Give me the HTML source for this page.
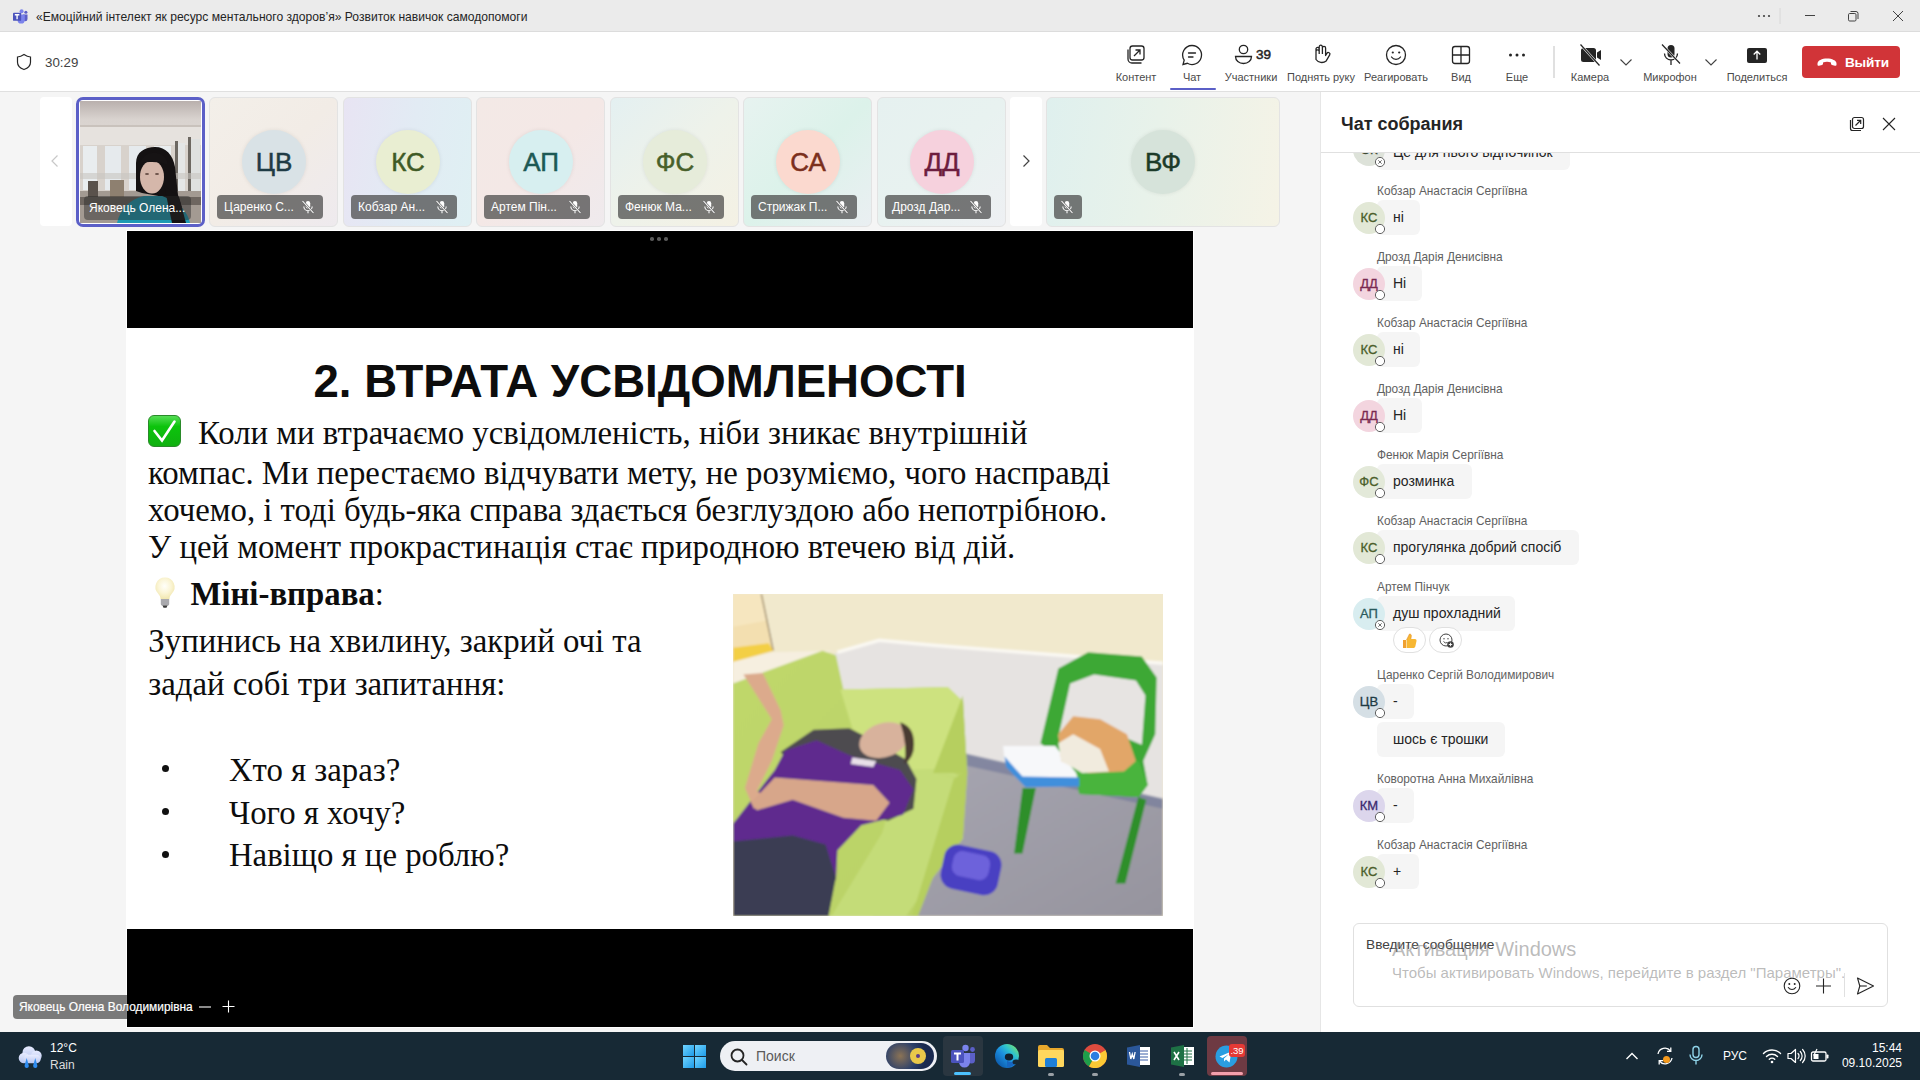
<!DOCTYPE html>
<html><head><meta charset="utf-8">
<style>
*{margin:0;padding:0;box-sizing:border-box}
html,body{width:1920px;height:1080px;overflow:hidden;background:#f5f5f5;font-family:"Liberation Sans",sans-serif;color:#242424}
.a{position:absolute}
#titlebar{left:0;top:0;width:1920px;height:32px;background:#ebebeb;border-bottom:1px solid #dcdcdc}
#toolbar{left:0;top:32px;width:1920px;height:60px;background:#fff;border-bottom:1px solid #e0e0e0}
#stage{left:0;top:92px;width:1320px;height:940px;background:#f5f5f5}
#chat{left:1320px;top:92px;width:600px;height:940px;background:#fff;border-left:1px solid #e6e6e6}
#taskbar{left:0;top:1032px;width:1920px;height:48px;background:#172935}
.tb-btn{position:absolute;top:0;height:60px;text-align:center}
.tb-lbl{position:absolute;top:38.5px;font-size:11px;color:#4a4a4a;white-space:nowrap;transform:translateX(-50%)}
#slide{left:127px;top:231px;width:1066px;height:796px;background:#000;box-shadow:0 0 0 1px #fff}
#slidewhite{left:127px;top:328px;width:1066px;height:601px;background:#fff}

.tile{border:1px solid #e3e3e3;border-radius:6px;overflow:hidden}
.av{border-radius:50%;text-align:center;line-height:64px;font-size:26px;box-shadow:0 0 4px rgba(0,0,0,.08);-webkit-text-stroke:.5px currentColor}
.nm{height:24px;background:rgba(70,70,70,.72);border-radius:4px;color:#fff;font-size:12px;line-height:24px;padding-left:7px;white-space:nowrap}

.sl{font-family:"Liberation Serif",serif;font-size:32.8px;line-height:32.8px;color:#0d0d0d;white-space:nowrap}

.cnm{font-size:11.85px;color:#616161;white-space:nowrap;line-height:16px}
.bub{background:#f5f5f5;border-radius:6px}
.bub span{position:absolute;left:16px;top:9px;font-size:14px;color:#242424;white-space:nowrap;line-height:17px}
.cav{width:32px;height:32px;border-radius:50%;text-align:center;line-height:32px;font-size:13px;font-weight:normal;-webkit-text-stroke:.3px currentColor}
.react{width:33px;height:26px;border:1px solid #e0e0e0;border-radius:13px;background:#fff}
</style></head><body>

<div id="titlebar" class="a">
 <svg class="a" style="left:11.5px;top:9px" width="16.5" height="14.5" viewBox="0 0 18 16">
  <circle cx="10.5" cy="2.6" r="2.2" fill="#7b83eb"/><circle cx="15.2" cy="3.6" r="1.7" fill="#5b5fc7"/>
  <path d="M12 6h5v5a2.5 2.5 0 0 1-5 0z" fill="#5b5fc7"/>
  <path d="M6 6h8v6a4 4 0 0 1-8 0z" fill="#7b83eb"/>
  <rect x="1" y="4" width="9" height="9" rx="1" fill="#4b53bc"/>
  <path d="M3 6.3h5M5.5 6.3v5" stroke="#fff" stroke-width="1.5"/>
 </svg>
 <div class="a" style="left:36px;top:9.5px;font-size:12.1px;color:#242424;white-space:nowrap" id="ttl">«Емоційний інтелект як ресурс ментального здоров’я» Розвиток навичок самодопомоги</div>
 <svg class="a" style="left:1750px;top:8px" width="160" height="16" viewBox="0 0 160 16">
  <circle cx="9" cy="8" r="1.1" fill="#424242"/><circle cx="14" cy="8" r="1.1" fill="#424242"/><circle cx="19" cy="8" r="1.1" fill="#424242"/>
  <line x1="30" y1="0" x2="30" y2="16" stroke="#d8d8d8" stroke-width="1"/>
  <line x1="55" y1="7.5" x2="65" y2="7.5" stroke="#424242" stroke-width="1"/>
  <rect x="98.5" y="5.5" width="7.5" height="7.5" rx="1.2" fill="none" stroke="#424242" stroke-width="1"/>
  <path d="M100.5 3.5h5.5a2 2 0 0 1 2 2v5.5" fill="none" stroke="#424242" stroke-width="1"/>
  <path d="M143 3l10 10M153 3l-10 10" stroke="#424242" stroke-width="1"/>
 </svg>
</div>
<div id="toolbar" class="a">
 <svg class="a" style="left:14.5px;top:21px" width="18" height="18" viewBox="0 0 18 18"><path d="M9 1.6C6.8 3.1 4.6 3.9 2.5 4v5.2c0 3.3 2.2 5.8 6.5 7.3 4.3-1.5 6.5-4 6.5-7.3V4C13.4 3.9 11.2 3.1 9 1.6z" fill="none" stroke="#242424" stroke-width="1.2"/></svg>
 <div class="a" style="left:45px;top:22.5px;font-size:13.3px;color:#424242">30:29</div>
 <!-- buttons -->
 <svg class="a" style="left:1124px;top:11px" width="24" height="24" viewBox="0 0 24 24"><rect x="6" y="3" width="14" height="14" rx="2.5" fill="none" stroke="#242424" stroke-width="1.3"/><path d="M4 6.5v9.5a4 4 0 0 0 4 4h9.5" fill="none" stroke="#242424" stroke-width="1.3"/><path d="M10 13l6-6M11.5 7h4.5v4.5" fill="none" stroke="#242424" stroke-width="1.3"/></svg>
 <div class="tb-lbl" style="left:1136px">Контент</div>
 <svg class="a" style="left:1180px;top:11px" width="24" height="24" viewBox="0 0 24 24"><path d="M12 2.5a9.5 9.5 0 1 1-4.6 17.8L3 21.5l1.2-4.3A9.5 9.5 0 0 1 12 2.5z" fill="none" stroke="#242424" stroke-width="1.3"/><path d="M8.5 10h7M8.5 14h4.5" stroke="#242424" stroke-width="1.3" stroke-linecap="round"/></svg>
 <div class="tb-lbl" style="left:1192px">Чат</div>
 <div class="a" style="left:1170px;top:55.5px;width:46px;height:2.5px;background:#5b5fc7;border-radius:1px"></div>
 <svg class="a" style="left:1232px;top:11px" width="24" height="24" viewBox="0 0 24 24"><circle cx="11.5" cy="6.5" r="4.2" fill="none" stroke="#242424" stroke-width="1.3"/><path d="M3.5 13.5h16a0 0 0 0 1 0 0c0 4-3.5 7-8 7s-8-3-8-7z" fill="none" stroke="#242424" stroke-width="1.3"/></svg>
 <div class="a" style="left:1256px;top:15px;font-size:13.5px;font-weight:normal;-webkit-text-stroke:.5px #242424;color:#242424">39</div>
 <div class="tb-lbl" style="left:1251px">Участники</div>
 <svg class="a" style="left:1309px;top:11px" width="24" height="24" viewBox="0 0 24 24"><path d="M7 12V6a1.6 1.6 0 0 1 3.2 0v5M10.2 11V3.8a1.6 1.6 0 0 1 3.2 0V11M13.4 11V5a1.6 1.6 0 0 1 3.2 0v7.5l1.3-2.2a1.6 1.6 0 0 1 2.8 1.6l-3.5 6A7 7 0 0 1 7 16.5V8.5a1.6 1.6 0 0 1 3.2 0" fill="none" stroke="#242424" stroke-width="1.3" stroke-linejoin="round"/></svg>
 <div class="tb-lbl" style="left:1321px">Поднять руку</div>
 <svg class="a" style="left:1384px;top:11px" width="24" height="24" viewBox="0 0 24 24"><circle cx="12" cy="12" r="9.5" fill="none" stroke="#242424" stroke-width="1.3"/><circle cx="8.8" cy="9.5" r="1.1" fill="#242424"/><circle cx="15.2" cy="9.5" r="1.1" fill="#242424"/><path d="M7.5 14a5.5 5.5 0 0 0 9 0" fill="none" stroke="#242424" stroke-width="1.3" stroke-linecap="round"/></svg>
 <div class="tb-lbl" style="left:1396px">Реагировать</div>
 <svg class="a" style="left:1449px;top:11px" width="24" height="24" viewBox="0 0 24 24"><rect x="3.5" y="3.5" width="17" height="17" rx="2.5" fill="none" stroke="#242424" stroke-width="1.3"/><path d="M12 3.5v17M3.5 12h17" stroke="#242424" stroke-width="1.3"/></svg>
 <div class="tb-lbl" style="left:1461px">Вид</div>
 <svg class="a" style="left:1505px;top:11px" width="24" height="24" viewBox="0 0 24 24"><circle cx="5.5" cy="12" r="1.5" fill="#242424"/><circle cx="12" cy="12" r="1.5" fill="#242424"/><circle cx="18.5" cy="12" r="1.5" fill="#242424"/></svg>
 <div class="tb-lbl" style="left:1517px">Еще</div>
 <div class="a" style="left:1553px;top:14px;width:2px;height:32px;background:#e0e0e0"></div>
 <svg class="a" style="left:1578px;top:10px" width="26" height="26" viewBox="0 0 26 26"><path d="M3 8.5a2.5 2.5 0 0 1 2.5-2.5h10a2.5 2.5 0 0 1 2.5 2.5v9a2.5 2.5 0 0 1-2.5 2.5h-10A2.5 2.5 0 0 1 3 17.5z" fill="#242424"/><path d="M19 10.5l4-2.5v10l-4-2.5z" fill="#242424"/><path d="M2.5 2.5l19 21" stroke="#fff" stroke-width="2.5"/><path d="M2.5 2.5l19 21" stroke="#242424" stroke-width="1.2"/></svg>
 <div class="tb-lbl" style="left:1590px">Камера</div>
 <svg class="a" style="left:1619px;top:25px" width="14" height="10" viewBox="0 0 14 10"><path d="M1.5 2.5l5.5 5.5 5.5-5.5" fill="none" stroke="#424242" stroke-width="1.1"/></svg>
 <svg class="a" style="left:1658px;top:10px" width="26" height="26" viewBox="0 0 26 26"><rect x="9.5" y="3" width="7" height="12.5" rx="3.5" fill="#242424"/><path d="M6.5 11.5a6.5 6.5 0 0 0 13 0M13 18v5" fill="none" stroke="#242424" stroke-width="1.3"/><path d="M4 2.5l18 19" stroke="#fff" stroke-width="2.5"/><path d="M4 2.5l18 19" stroke="#242424" stroke-width="1.2"/></svg>
 <div class="tb-lbl" style="left:1670px">Микрофон</div>
 <svg class="a" style="left:1704px;top:25px" width="14" height="10" viewBox="0 0 14 10"><path d="M1.5 2.5l5.5 5.5 5.5-5.5" fill="none" stroke="#424242" stroke-width="1.1"/></svg>
 <svg class="a" style="left:1745px;top:11px" width="24" height="24" viewBox="0 0 24 24"><rect x="2" y="5" width="20" height="15" rx="2" fill="#242424"/><path d="M12 16.5V8.5M8.7 11.5L12 8.2l3.3 3.3" fill="none" stroke="#fff" stroke-width="1.3"/></svg>
 <div class="tb-lbl" style="left:1757px">Поделиться</div>
 <div class="a" style="left:1802px;top:14px;width:98px;height:32px;background:#c4314b;border-radius:4px;background:#d13438"></div>
 <svg class="a" style="left:1816px;top:22px" width="22" height="16" viewBox="0 0 22 16"><path d="M1.5 9.5c0-3 4.5-5 9.5-5s9.5 2 9.5 5v1.2c0 .8-.7 1.3-1.5 1.1l-3-.8c-.6-.2-1-.7-1-1.3V8.4c-1.2-.4-2.6-.6-4-.6s-2.8.2-4 .6v1.3c0 .6-.4 1.1-1 1.3l-3 .8c-.8.2-1.5-.3-1.5-1.1z" fill="#fff"/></svg>
 <div class="a" style="left:1845px;top:22.5px;font-size:13.6px;font-weight:bold;color:#fff;letter-spacing:-.2px">Выйти</div>
</div>


<div id="stage" class="a">
 <div class="a" style="left:40px;top:5px;width:32px;height:129px;background:#fff;border-radius:4px"></div>
 <svg class="a" style="left:48px;top:62px" width="14" height="14" viewBox="0 0 14 14"><path d="M9.5 1.5L4 7l5.5 5.5" fill="none" stroke="#c8c8c8" stroke-width="1.2"/></svg>
 <div class="a" style="left:1010px;top:5px;width:32px;height:129px;background:#fff;border-radius:4px"></div>
 <svg class="a" style="left:1019px;top:62px" width="14" height="14" viewBox="0 0 14 14"><path d="M4.5 1.5L10 7l-5.5 5.5" fill="none" stroke="#424242" stroke-width="1.2"/></svg>
 <div class="a" style="left:76px;top:5px;width:129px;height:130px;border:3px solid #5b5fc7;border-radius:7px;overflow:hidden;background:#fff" id="vid">
  <svg class="a" style="left:1px;top:1px" width="121" height="122" viewBox="0 0 121 122">
   <defs><linearGradient id="ceil" x1="0" y1="0" x2="0" y2="1"><stop offset="0" stop-color="#b9b0ad"/><stop offset=".15" stop-color="#d9d3cf"/><stop offset="1" stop-color="#e9e5e1"/></linearGradient></defs>
   <rect width="121" height="122" fill="url(#ceil)"/>
   <rect y="24" width="121" height="2" fill="#c9c2bc"/>
   <rect y="26" width="121" height="18" fill="#e6e2de"/>
   <rect y="44" width="121" height="46" fill="#d8d2cc"/>
   <rect x="3" y="45" width="14" height="44" fill="#e9edef"/>
   <rect x="25" y="45" width="16" height="44" fill="#e6eaed"/>
   <rect x="49" y="45" width="17" height="44" fill="#e6eaed"/>
   <rect x="74" y="45" width="17" height="44" fill="#e9edef"/>
   <rect x="95" y="40" width="3" height="52" fill="#6d6862"/>
   <rect x="98" y="42" width="7" height="50" fill="#e4e6e6"/>
   <rect x="108" y="36" width="3" height="58" fill="#6d6862"/>
   <rect x="111" y="38" width="9" height="56" fill="#dfe1e0"/>
   <rect x="0" y="72" width="121" height="6" fill="#c8c4c0" opacity=".6"/>
   <rect y="90" width="121" height="32" fill="#a39a92"/>
   <rect x="8" y="80" width="10" height="18" fill="#5a524c"/>
   <rect x="30" y="79" width="14" height="20" fill="#8e8070"/>
   <rect x="0" y="96" width="121" height="8" fill="#6e6660"/>
   <path d="M56 90V62C56 51 65 46 75 46 86 46 93 54 95 66L98 94 107 122H82L84 96 62 92z" fill="#141112"/>
   <ellipse cx="72" cy="76" rx="12" ry="16.5" fill="#d5b7aa"/>
   <path d="M60 62c3-8 10-11 17-10 6 1 10 5 11 12-7-3-15-4-28-2z" fill="#161314"/>
   <ellipse cx="67" cy="73" rx="2" ry="1" fill="#6a5048"/><ellipse cx="77" cy="73" rx="2" ry="1" fill="#6a5048"/>
   <path d="M37 122c3-14 13-24 27-27h18c10 4 24 10 28 27z" fill="#1e9bb2"/>
   <path d="M84 84l8 38h14l-7-26z" fill="#141112"/>
  </svg>
  <div class="a" style="left:5px;top:96px;width:107px;height:24px;background:rgba(40,40,40,.45);border-radius:4px"></div>
  <div class="a" style="left:10px;top:101px;font-size:12px;line-height:14px;color:#fff;white-space:nowrap">Яковець Олена...</div>
 </div>
 <div class="a tile" style="left:209px;top:5px;width:129px;height:130px;background:linear-gradient(135deg,#f3efe9 0%,#f2ece6 50%,#eeeaee 100%)">
  <div class="a av" style="left:32px;top:32px;width:64px;height:64px;background:#d9e2e6;color:#1f3b45">ЦВ</div>
  <div class="a nm" style="left:7px;top:97px;width:106px">Царенко С...<svg class="a" style="right:7px;top:4px" width="16" height="16" viewBox="0 0 16 16"><rect x="5.8" y="2" width="4.4" height="7.5" rx="2.2" fill="#fff"/><path d="M3.8 7.5a4.2 4.2 0 0 0 8.4 0M8 11.7v2.5" fill="none" stroke="#fff" stroke-width="1.1"/><path d="M2.5 2l11 12" stroke="#6e6e6e" stroke-width="2.2"/><path d="M2.5 2l11 12" stroke="#fff" stroke-width="1.1"/></svg></div>
 </div>
 <div class="a tile" style="left:343px;top:5px;width:129px;height:130px;background:linear-gradient(100deg,#e8e4f3 0%,#e2ebf4 50%,#dff0f3 100%)">
  <div class="a av" style="left:32px;top:32px;width:64px;height:64px;background:#e9eed2;color:#3f5a25">КС</div>
  <div class="a nm" style="left:7px;top:97px;width:106px">Кобзар Ан...<svg class="a" style="right:7px;top:4px" width="16" height="16" viewBox="0 0 16 16"><rect x="5.8" y="2" width="4.4" height="7.5" rx="2.2" fill="#fff"/><path d="M3.8 7.5a4.2 4.2 0 0 0 8.4 0M8 11.7v2.5" fill="none" stroke="#fff" stroke-width="1.1"/><path d="M2.5 2l11 12" stroke="#6e6e6e" stroke-width="2.2"/><path d="M2.5 2l11 12" stroke="#fff" stroke-width="1.1"/></svg></div>
 </div>
 <div class="a tile" style="left:476px;top:5px;width:129px;height:130px;background:linear-gradient(135deg,#f3e9e6 0%,#f4e8e6 50%,#efeaed 100%)">
  <div class="a av" style="left:32px;top:32px;width:64px;height:64px;background:#d7eff0;color:#1d5955">АП</div>
  <div class="a nm" style="left:7px;top:97px;width:106px">Артем Пін...<svg class="a" style="right:7px;top:4px" width="16" height="16" viewBox="0 0 16 16"><rect x="5.8" y="2" width="4.4" height="7.5" rx="2.2" fill="#fff"/><path d="M3.8 7.5a4.2 4.2 0 0 0 8.4 0M8 11.7v2.5" fill="none" stroke="#fff" stroke-width="1.1"/><path d="M2.5 2l11 12" stroke="#6e6e6e" stroke-width="2.2"/><path d="M2.5 2l11 12" stroke="#fff" stroke-width="1.1"/></svg></div>
 </div>
 <div class="a tile" style="left:610px;top:5px;width:129px;height:130px;background:linear-gradient(135deg,#e4f0f1 0%,#eef2ea 50%,#f4f1e4 100%)">
  <div class="a av" style="left:32px;top:32px;width:64px;height:64px;background:#e6ecda;color:#48602a">ФС</div>
  <div class="a nm" style="left:7px;top:97px;width:106px">Фенюк Ма...<svg class="a" style="right:7px;top:4px" width="16" height="16" viewBox="0 0 16 16"><rect x="5.8" y="2" width="4.4" height="7.5" rx="2.2" fill="#fff"/><path d="M3.8 7.5a4.2 4.2 0 0 0 8.4 0M8 11.7v2.5" fill="none" stroke="#fff" stroke-width="1.1"/><path d="M2.5 2l11 12" stroke="#6e6e6e" stroke-width="2.2"/><path d="M2.5 2l11 12" stroke="#fff" stroke-width="1.1"/></svg></div>
 </div>
 <div class="a tile" style="left:743px;top:5px;width:129px;height:130px;background:linear-gradient(135deg,#e7f3f0 0%,#dcf2ea 50%,#eaeff2 100%)">
  <div class="a av" style="left:32px;top:32px;width:64px;height:64px;background:#fbd9cf;color:#7b2f1c">СА</div>
  <div class="a nm" style="left:7px;top:97px;width:106px">Стрижак П...<svg class="a" style="right:7px;top:4px" width="16" height="16" viewBox="0 0 16 16"><rect x="5.8" y="2" width="4.4" height="7.5" rx="2.2" fill="#fff"/><path d="M3.8 7.5a4.2 4.2 0 0 0 8.4 0M8 11.7v2.5" fill="none" stroke="#fff" stroke-width="1.1"/><path d="M2.5 2l11 12" stroke="#6e6e6e" stroke-width="2.2"/><path d="M2.5 2l11 12" stroke="#fff" stroke-width="1.1"/></svg></div>
 </div>
 <div class="a tile" style="left:877px;top:5px;width:129px;height:130px;background:linear-gradient(135deg,#e6f1f0 0%,#e8f2f0 50%,#eef0f3 100%)">
  <div class="a av" style="left:32px;top:32px;width:64px;height:64px;background:#f6d1dd;color:#6d1d3e">ДД</div>
  <div class="a nm" style="left:7px;top:97px;width:106px">Дрозд Дар...<svg class="a" style="right:7px;top:4px" width="16" height="16" viewBox="0 0 16 16"><rect x="5.8" y="2" width="4.4" height="7.5" rx="2.2" fill="#fff"/><path d="M3.8 7.5a4.2 4.2 0 0 0 8.4 0M8 11.7v2.5" fill="none" stroke="#fff" stroke-width="1.1"/><path d="M2.5 2l11 12" stroke="#6e6e6e" stroke-width="2.2"/><path d="M2.5 2l11 12" stroke="#fff" stroke-width="1.1"/></svg></div>
 </div>
 <div class="a tile" style="left:1046px;top:5px;width:234px;height:130px;background:linear-gradient(100deg,#dff0ee 0%,#e8f2ea 45%,#f5f3e6 100%)">
  <div class="a av" style="left:84px;top:32px;width:64px;height:64px;background:#d6e3da;color:#1c3b29">ВФ</div>
  <div class="a nm" style="left:7px;top:97px;width:28px"><svg class="a" style="right:7px;top:4px" width="16" height="16" viewBox="0 0 16 16"><rect x="5.8" y="2" width="4.4" height="7.5" rx="2.2" fill="#fff"/><path d="M3.8 7.5a4.2 4.2 0 0 0 8.4 0M8 11.7v2.5" fill="none" stroke="#fff" stroke-width="1.1"/><path d="M2.5 2l11 12" stroke="#6e6e6e" stroke-width="2.2"/><path d="M2.5 2l11 12" stroke="#fff" stroke-width="1.1"/></svg></div>
 </div>
</div>


<div id="slide" class="a">
 <div class="a" style="left:523px;top:6px;width:24px;height:4px;display:flex;gap:3.5px"><i style="width:3.5px;height:3.5px;border-radius:50%;background:#5a5a5a"></i><i style="width:3.5px;height:3.5px;border-radius:50%;background:#5a5a5a"></i><i style="width:3.5px;height:3.5px;border-radius:50%;background:#5a5a5a"></i></div>
</div>
<div id="slidewhite" class="a"></div>
<div class="a sl" style="left:313.5px;top:365.5px;font-family:'Liberation Sans',sans-serif;font-weight:bold;font-size:45.6px">2. ВТРАТА УСВІДОМЛЕНОСТІ</div>
<div class="a" style="left:148px;top:415px;width:33px;height:32px;border-radius:6px;background:linear-gradient(#55dd55,#0cc40c 35%,#10b010);border:1px solid #2a8a2a"><svg class="a" style="left:-1px;top:-1px" width="33" height="32" viewBox="0 0 33 32"><path d="M6.5 16L14 25.5 26.5 6.5" fill="none" stroke="#fff" stroke-width="2.6" stroke-linecap="round" stroke-linejoin="miter"/></svg></div>
<div class="a sl" style="left:198px;top:417.2px">Коли ми втрачаємо усвідомленість, ніби зникає внутрішній</div>
<div class="a sl" style="left:148px;top:456.7px">компас. Ми перестаємо відчувати мету, не розуміємо, чого насправді</div>
<div class="a sl" style="left:148px;top:494px">хочемо, і тоді будь-яка справа здається безглуздою або непотрібною.</div>
<div class="a sl" style="left:148px;top:530.5px">У цей момент прокрастинація стає природною втечею від дій.</div>
<svg class="a" style="left:151px;top:575px" width="28" height="35" viewBox="0 0 28 35"><defs><radialGradient id="bulb" cx=".48" cy=".4" r=".6"><stop offset="0" stop-color="#fffffa"/><stop offset=".55" stop-color="#fbf5d6"/><stop offset="1" stop-color="#f1e7b0"/></radialGradient></defs><path d="M14 2.5a9.5 9.5 0 0 0-6.8 16.2c1.3 1.5 2.3 3 2.3 5.3h9c0-2.3 1-3.8 2.3-5.3A9.5 9.5 0 0 0 14 2.5z" fill="url(#bulb)"/><path d="M9.8 24h8.4v5c0 1-1 1.8-2 1.8h-4.4c-1 0-2-.8-2-1.8z" fill="#a9a9ad"/><path d="M11.5 30.5h5l-1 2.2h-3z" fill="#3a3a3a"/></svg>
<div class="a sl" style="left:190.4px;top:577.8px"><b>Міні-вправа</b>:</div>
<div class="a sl" style="left:148.3px;top:624.7px">Зупинись на хвилину, закрий очі та</div>
<div class="a sl" style="left:148.3px;top:667.9px">задай собі три запитання:</div>
<div class="a" style="left:162px;top:765px;width:7px;height:7px;border-radius:50%;background:#111"></div>
<div class="a" style="left:162px;top:808px;width:7px;height:7px;border-radius:50%;background:#111"></div>
<div class="a" style="left:162px;top:850.5px;width:7px;height:7px;border-radius:50%;background:#111"></div>
<div class="a sl" style="left:228.9px;top:753.6px">Хто я зараз?</div>
<div class="a sl" style="left:228.9px;top:796.7px">Чого я хочу?</div>
<div class="a sl" style="left:228.9px;top:839.2px">Навіщо я це роблю?</div>
<svg class="a" style="left:733px;top:594px" width="430" height="322" viewBox="0 0 430 322">
 <defs>
  <filter id="bl" x="0" y="0" width="100%" height="100%"><feGaussianBlur stdDeviation="1.2"/></filter>
  <clipPath id="pc"><rect width="430" height="322"/></clipPath>
  <linearGradient id="flr" x1="0" y1="0" x2="1" y2="1"><stop offset="0" stop-color="#a8a7b2"/><stop offset="1" stop-color="#96949e"/></linearGradient>
  <linearGradient id="sofa" x1="0" y1="0" x2="1" y2="1"><stop offset="0" stop-color="#c0d86c"/><stop offset="1" stop-color="#b9d166"/></linearGradient>
 </defs>
 <g clip-path="url(#pc)"><g filter="url(#bl)">
 <rect x="-5" y="-5" width="440" height="332" fill="#f1e9cd"/>
 <polygon points="0.0,0.0 29.8,0.0 40.3,56.7 0.0,67.1" fill="#f3dfb0"/>
 <polygon points="0.0,0.0 29.8,0.0 32.8,26.8 0.0,32.8" fill="#f6e6bf"/>
 <polyline points="28.3,0.0 40.3,56.7" fill="none" stroke="#8a7a60" stroke-width="1.2"/>
 <polygon points="0.0,53.7 35.8,49.2 40.3,56.7 0.0,68.0" fill="#f3cf45"/>
 <polygon points="0.0,68.0 40.3,58.2 98.4,56.7 0.0,89.5" fill="#f6efe0"/>
 <polygon points="101.4,59.7 146.2,47.1 200.0,51.3 430.0,69.2 430.0,322.2 21.0,322.2 21.0,119.3" fill="#e6e3e1"/>
 <polyline points="104.4,58.2 146.2,46.2 200.0,51.3 430.0,69.2" fill="none" stroke="#faf8f2" stroke-width="3.5"/>
 <polygon points="232.8,161.1 430.0,205.8 430.0,322.2 140.3,322.2" fill="url(#flr)"/>
 <polygon points="232.8,159.6 430.0,204.4 430.0,214.8 232.8,171.5" fill="#7a809c" opacity=".8"/>
 <polygon points="0.0,89.5 89.5,56.7 102.9,61.2 110.4,95.5 214.8,93.1 230.0,107.4 229.8,101.4 234.3,179.0 229.8,244.6 200.0,283.4 179.0,322.2 0.0,322.2" fill="url(#sofa)"/>
 <polygon points="107.4,95.5 214.8,93.1 230.0,107.4 230.0,176.0 167.1,176.0 119.3,134.2" fill="#cde27f"/>
 <polygon points="167.1,176.0 214.8,174.5 230.0,185.0 200.0,179.0 226.8,185.0 229.8,244.6 200.0,283.4 173.0,322.2 98.4,322.2 149.2,238.7" fill="#c4dc78"/>
 <polygon points="220.8,185.0 230.0,179.0 200.0,179.0 229.8,101.4 234.3,179.0 229.8,244.6 200.0,283.4 185.0,322.2 179.0,322.2" fill="#b6cf5f"/>
 <polygon points="47.7,158.1 80.5,135.7 116.3,134.2 134.2,143.2 173.0,165.6 183.5,185.0 180.5,214.8 155.1,226.7 89.5,208.8" fill="#4d4b50"/>
 <polygon points="0.0,229.7 41.8,176.0 52.2,156.6 83.5,146.2 119.3,162.6 167.1,176.0 180.5,195.4 170.0,220.8 128.3,231.2 104.4,256.6 102.9,286.4 77.6,247.6 0.0,250.6" fill="#5e2b8e"/>
 <polygon points="0.0,247.6 59.7,241.6 92.5,250.6 102.9,283.4 95.5,322.2 0.0,322.2" fill="#3a3e52"/>
 <polygon points="119.3,163.5 143.2,167.1 140.2,173.0 117.8,170.0" fill="#e8e0e8"/>
 <ellipse cx="150.7" cy="146.2" rx="25" ry="17" fill="#d8b29c" transform="rotate(-18 150.7 146.2)"/>
 <path d="M167.1,128.3 q14,4 14,22 q0,14 -10,20 q4,-18 -4,-42z" fill="#4a3a32"/>
 <polygon points="10.4,80.5 29.8,79.1 47.7,116.3 50.7,131.3 38.8,167.1 23.9,196.9 41.8,208.8 20.9,214.8 11.9,193.9 25.4,149.2 38.8,125.3" fill="#dcaa8c"/>
 <polygon points="17.9,208.8 41.8,183.5 140.2,190.9 156.6,208.8 143.2,226.7 110.4,223.7 59.7,205.8 23.9,216.3" fill="#d7a68a"/>
 <polygon points="307.4,149.2 325.3,74.6 355.1,58.2 408.8,62.6 423.7,83.5 422.3,140.2 410.3,167.1 414.8,190.9 405.8,202.9 346.2,199.9 343.2,185.0 325.3,162.6" fill="#3da834"/>
 <polygon points="325.3,143.2 337.2,89.5 361.1,80.5 402.9,86.5 412.4,101.4 408.8,150.7 390.9,143.2 340.2,149.2" fill="#e7e4e2"/>
 <polygon points="343.2,176.0 405.8,167.1 414.8,190.9 405.8,202.9 346.2,199.9" fill="#48b43c"/>
 <polygon points="289.5,193.9 302.9,193.9 289.5,259.5 281.1,259.5" fill="#2e8f2a"/>
 <polygon points="405.3,202.9 413.3,205.8 392.4,289.4 382.6,289.4" fill="#2e8f2a"/>
 <polygon points="270.1,152.1 322.3,152.1 343.2,179.0 346.2,190.9 292.5,192.4 271.6,167.1" fill="#f7f8fa"/>
 <polygon points="271.6,162.6 289.5,182.6 346.2,183.5 346.2,192.4 292.5,193.3 273.1,173.0" fill="#3f8fdc"/>
 <polygon points="325.3,140.2 340.2,122.3 367.1,125.3 393.9,140.2 402.9,167.1 390.9,177.5 355.1,179.0 328.3,167.1" fill="#e2a667"/>
 <polygon points="325.3,149.2 340.2,140.2 367.1,155.1 376.0,177.5 349.2,179.0 328.3,167.1" fill="#f1ebde"/>
 <rect x="208.9" y="253.6" width="58.2" height="44.7" rx="14" fill="#4a3fc2" transform="rotate(12 238.2 276.0)"/><rect x="219.4" y="258.9" width="37.3" height="25.4" rx="9" fill="#6d62db" transform="rotate(12 238.2 271.5)"/>
 </g></g>
</svg>


<div id="chat" class="a">
 <div class="a" style="left:20px;top:22px;font-size:18px;font-weight:bold;color:#242424">Чат собрания</div>
 <svg class="a" style="left:527px;top:23px" width="18" height="18" viewBox="0 0 18 18"><rect x="4.5" y="2.5" width="11" height="11" rx="2" fill="none" stroke="#242424" stroke-width="1.2"/><path d="M2.5 5v8.5a2 2 0 0 0 2 2H13" fill="none" stroke="#242424" stroke-width="1.2"/><path d="M7.5 10.5l5-5M9 5.3h3.7V9" fill="none" stroke="#242424" stroke-width="1.2"/></svg>
 <svg class="a" style="left:560px;top:24px" width="16" height="16" viewBox="0 0 16 16"><path d="M2 2l12 12M14 2L2 14" stroke="#242424" stroke-width="1.1"/></svg>
 <div class="a" style="left:0;top:60px;width:600px;height:1px;background:#e0e0e0"></div>
</div>
<div class="a" id="msgs" style="left:1321px;top:153px;width:599px;height:879px;overflow:hidden;background:#fff">
 <div class="a bub" style="left:56px;top:-18px;width:193px;height:35px"><span style="left:16px">Це для нього відпочинок</span></div>
 <div class="a cav" style="left:32px;top:-19px;background:#dde2d9;color:#3d4a33">СК</div>
 <svg class="a" style="left:53px;top:3px" width="12" height="12" viewBox="0 0 12 12"><circle cx="6" cy="6" r="4.6" fill="#fff" stroke="#616161" stroke-width="1"/><path d="M4.3 4.3l3.4 3.4M7.7 4.3l-3.4 3.4" stroke="#616161" stroke-width="0.9"/></svg>
 <div class="a cnm" style="left:56px;top:30px">Кобзар Анастасія Сергіївна</div>
 <div class="a bub" style="left:56px;top:47px;width:43px;height:35px"><span>ні</span></div>
 <div class="a cav" style="left:32px;top:49px;background:#e2e8d6;color:#4a5e2a">КС</div>
 <svg class="a" style="left:53px;top:70px" width="12" height="12" viewBox="0 0 12 12"><circle cx="6" cy="6" r="4.6" fill="#fff" stroke="#616161" stroke-width="1"/></svg>
 <div class="a cnm" style="left:56px;top:96px">Дрозд Дарія Денисівна</div>
 <div class="a bub" style="left:56px;top:113px;width:45px;height:35px"><span>Ні</span></div>
 <div class="a cav" style="left:32px;top:115px;background:#f3d5df;color:#7a2950">ДД</div>
 <svg class="a" style="left:53px;top:136px" width="12" height="12" viewBox="0 0 12 12"><circle cx="6" cy="6" r="4.6" fill="#fff" stroke="#616161" stroke-width="1"/></svg>
 <div class="a cnm" style="left:56px;top:162px">Кобзар Анастасія Сергіївна</div>
 <div class="a bub" style="left:56px;top:179px;width:43px;height:35px"><span>ні</span></div>
 <div class="a cav" style="left:32px;top:181px;background:#e2e8d6;color:#4a5e2a">КС</div>
 <svg class="a" style="left:53px;top:202px" width="12" height="12" viewBox="0 0 12 12"><circle cx="6" cy="6" r="4.6" fill="#fff" stroke="#616161" stroke-width="1"/></svg>
 <div class="a cnm" style="left:56px;top:228px">Дрозд Дарія Денисівна</div>
 <div class="a bub" style="left:56px;top:245px;width:45px;height:35px"><span>Ні</span></div>
 <div class="a cav" style="left:32px;top:247px;background:#f3d5df;color:#7a2950">ДД</div>
 <svg class="a" style="left:53px;top:268px" width="12" height="12" viewBox="0 0 12 12"><circle cx="6" cy="6" r="4.6" fill="#fff" stroke="#616161" stroke-width="1"/></svg>
 <div class="a cnm" style="left:56px;top:294px">Фенюк Марія Сергіївна</div>
 <div class="a bub" style="left:56px;top:311px;width:95px;height:35px"><span>розминка</span></div>
 <div class="a cav" style="left:32px;top:313px;background:#e3e9d9;color:#4a5e2a">ФС</div>
 <svg class="a" style="left:53px;top:334px" width="12" height="12" viewBox="0 0 12 12"><circle cx="6" cy="6" r="4.6" fill="#fff" stroke="#616161" stroke-width="1"/></svg>
 <div class="a cnm" style="left:56px;top:360px">Кобзар Анастасія Сергіївна</div>
 <div class="a bub" style="left:56px;top:377px;width:202px;height:35px"><span>прогулянка добрий спосіб</span></div>
 <div class="a cav" style="left:32px;top:379px;background:#e2e8d6;color:#4a5e2a">КС</div>
 <svg class="a" style="left:53px;top:400px" width="12" height="12" viewBox="0 0 12 12"><circle cx="6" cy="6" r="4.6" fill="#fff" stroke="#616161" stroke-width="1"/></svg>
 <div class="a cnm" style="left:56px;top:426px">Артем Пінчук</div>
 <div class="a bub" style="left:56px;top:443px;width:138px;height:35px"><span>душ прохладний</span></div>
 <div class="a cav" style="left:32px;top:445px;background:#d8edf0;color:#2a5a5c">АП</div>
 <svg class="a" style="left:53px;top:466px" width="12" height="12" viewBox="0 0 12 12"><circle cx="6" cy="6" r="4.6" fill="#fff" stroke="#616161" stroke-width="1"/><path d="M4.3 4.3l3.4 3.4M7.7 4.3l-3.4 3.4" stroke="#616161" stroke-width="0.9"/></svg>
 <div class="a cnm" style="left:56px;top:513.5px">Царенко Сергій Володимирович</div>
 <div class="a bub" style="left:56px;top:530.5px;width:37px;height:35px"><span>-</span></div>
 <div class="a cav" style="left:32px;top:532.5px;background:#d5dfe5;color:#1f3a44">ЦВ</div>
 <svg class="a" style="left:53px;top:553.5px" width="12" height="12" viewBox="0 0 12 12"><circle cx="6" cy="6" r="4.6" fill="#fff" stroke="#616161" stroke-width="1"/></svg>
 <div class="a cnm" style="left:56px;top:617.5px">Коворотна Анна Михайлівна</div>
 <div class="a bub" style="left:56px;top:634.5px;width:37px;height:35px"><span>-</span></div>
 <div class="a cav" style="left:32px;top:636.5px;background:#dcd6ec;color:#3b2a70">КМ</div>
 <svg class="a" style="left:53px;top:657.5px" width="12" height="12" viewBox="0 0 12 12"><circle cx="6" cy="6" r="4.6" fill="#fff" stroke="#616161" stroke-width="1"/></svg>
 <div class="a cnm" style="left:56px;top:683.5px">Кобзар Анастасія Сергіївна</div>
 <div class="a bub" style="left:56px;top:700.5px;width:42px;height:35px"><span>+</span></div>
 <div class="a cav" style="left:32px;top:702.5px;background:#e2e8d6;color:#4a5e2a">КС</div>
 <svg class="a" style="left:53px;top:723.5px" width="12" height="12" viewBox="0 0 12 12"><circle cx="6" cy="6" r="4.6" fill="#fff" stroke="#616161" stroke-width="1"/></svg>
 <div class="a bub" style="left:56px;top:569px;width:128px;height:35px"><span style="left:16px">шось є трошки</span></div>
 <div class="a react" style="left:72px;top:474px"><svg width="20" height="20" viewBox="0 0 20 20" style="position:absolute;left:6px;top:3px"><path d="M3 9h3v8H3z" fill="#f0a030"/><path d="M6.5 9l3-6c1.2 0 2 .8 1.8 2.2L10.8 8H15c1 0 1.7.9 1.5 1.9l-1.2 5.6c-.2.9-1 1.5-1.9 1.5H6.5z" fill="#f7b733"/><path d="M6.5 9l3-6c1.2 0 2 .8 1.8 2.2L10.8 8" fill="none" stroke="#e08a1e" stroke-width=".6"/></svg></div>
 <div class="a react" style="left:108px;top:474px"><svg width="20" height="20" viewBox="0 0 20 20" style="position:absolute;left:7px;top:3px"><circle cx="9" cy="9" r="6" fill="none" stroke="#424242" stroke-width="1"/><circle cx="7" cy="7.8" r=".7" fill="#424242"/><circle cx="11" cy="7.8" r=".7" fill="#424242"/><path d="M6.5 10.5a3 3 0 0 0 4 1" fill="none" stroke="#424242" stroke-width=".9"/><circle cx="13.5" cy="13.5" r="3.3" fill="#424242"/><path d="M13.5 11.8v3.4M11.8 13.5h3.4" stroke="#fff" stroke-width=".9"/></svg></div>
 <div class="a" style="left:32px;top:770px;width:535px;height:84px;border:1px solid #e0e0e0;border-radius:6px;background:#fff"></div>
 <div class="a" style="left:45px;top:783.5px;font-size:13.7px;color:#424242">Введите сообщение</div>
 <div class="a" style="left:71px;top:785px;font-size:20px;color:rgba(130,130,130,.55)">Активация Windows</div>
 <div class="a" style="left:71px;top:811px;font-size:15px;color:rgba(130,130,130,.55);white-space:nowrap">Чтобы активировать Windows, перейдите в раздел "Параметры".</div>
 <svg class="a" style="left:461px;top:823px" width="20" height="20" viewBox="0 0 20 20"><circle cx="10" cy="10" r="7.8" fill="none" stroke="#242424" stroke-width="1.1"/><circle cx="7.3" cy="8" r="1" fill="#242424"/><circle cx="12.7" cy="8" r="1" fill="#242424"/><path d="M6.3 11.5a4.5 4.5 0 0 0 7.4 0" fill="none" stroke="#242424" stroke-width="1.1" stroke-linecap="round"/></svg>
 <svg class="a" style="left:492px;top:823px" width="20" height="20" viewBox="0 0 20 20"><path d="M10.5 2.5v15M3 10h15" stroke="#242424" stroke-width="1.1"/></svg>
 <div class="a" style="left:523px;top:820px;width:1px;height:24px;background:#e0e0e0"></div>
 <svg class="a" style="left:534px;top:823px" width="20" height="20" viewBox="0 0 20 20"><path d="M2.5 2l16 8-16 8 2.3-8z" fill="none" stroke="#242424" stroke-width="1.1" stroke-linejoin="round"/><path d="M4.8 10h7" stroke="#242424" stroke-width="1.1"/></svg>
</div>


<div class="a" style="left:13px;top:995px;width:230px;height:24px;background:rgba(0,0,0,.5);border-radius:4px"></div>
<div class="a" style="left:19px;top:999px;font-size:11.9px;color:#fff;white-space:nowrap;line-height:16px;-webkit-text-stroke:.2px #fff">Яковець Олена Володимирівна</div>
<div class="a" style="left:199px;top:1006px;width:12px;height:1.5px;background:#8a8a8a"></div>
<svg class="a" style="left:222px;top:1000px" width="13" height="13" viewBox="0 0 13 13"><path d="M6.5 0.5v12M0.5 6.5h12" stroke="#fff" stroke-width="1.1"/></svg>
<div id="taskbar" class="a">
 <svg class="a" style="left:16px;top:12px" width="30" height="28" viewBox="0 0 28 26"><defs><linearGradient id="cl" x1="0" y1="0" x2="0" y2="1"><stop offset="0" stop-color="#e8ecff"/><stop offset="1" stop-color="#b8c6f0"/></linearGradient></defs><circle cx="12" cy="8" r="6" fill="url(#cl)"/><circle cx="19" cy="11" r="5" fill="url(#cl)"/><circle cx="7.5" cy="13" r="5" fill="url(#cl)"/><rect x="7" y="10" width="16" height="8" rx="4" fill="url(#cl)"/><path d="M10 13l-2 7a2 2 0 0 0 4 .5z" fill="#2e8cf0"/><path d="M18 13l-2 7a2 2 0 0 0 4 .5z" fill="#2e8cf0"/></svg>
 <div class="a" style="left:50px;top:9px;font-size:12px;color:#fff;line-height:14px">12°C</div>
 <div class="a" style="left:50px;top:25.5px;font-size:12px;color:#ddd;line-height:14px">Rain</div>
 <svg class="a" style="left:683px;top:13px" width="23" height="23" viewBox="0 0 23 23"><defs><linearGradient id="win" x1="0" y1="0" x2="1" y2="1"><stop offset="0" stop-color="#6fd3ff"/><stop offset="1" stop-color="#1e9be8"/></linearGradient></defs><rect x="0" y="0" width="11" height="11" fill="url(#win)"/><rect x="12" y="0" width="11" height="11" fill="url(#win)"/><rect x="0" y="12" width="11" height="11" fill="url(#win)"/><rect x="12" y="12" width="11" height="11" fill="url(#win)"/></svg>
 <div class="a" style="left:720px;top:9px;width:217px;height:30px;border-radius:15px;background:#eef0f4"></div>
 <svg class="a" style="left:729px;top:15px" width="20" height="20" viewBox="0 0 20 20"><circle cx="8.5" cy="8.5" r="6" fill="none" stroke="#242424" stroke-width="1.8"/><path d="M13 13l4.5 4.5" stroke="#242424" stroke-width="1.8" stroke-linecap="round"/></svg>
 <div class="a" style="left:756px;top:16px;font-size:14px;color:#5a5a5a;line-height:17px">Поиск</div>
 <div class="a" style="left:886px;top:11px;width:48px;height:26px;border-radius:13px;background:radial-gradient(circle at 30% 50%,#8b7355 0,#2a3f6a 45%,#1a2a50 70%);overflow:hidden"><div class="a" style="left:24px;top:5px;width:16px;height:16px;border-radius:50%;background:#e9c84a"></div><div class="a" style="left:30px;top:11px;width:4px;height:4px;border-radius:50%;background:#5a3a8a"></div></div>
 <div class="a" style="left:943px;top:4px;width:40px;height:40px;border-radius:4px;background:#2a3640"></div>
 <svg class="a" style="left:949px;top:12px" width="28" height="24" viewBox="0 0 28 24"><circle cx="16.5" cy="4" r="3.2" fill="#7b83eb"/><circle cx="23.5" cy="5.5" r="2.4" fill="#5b5fc7"/><path d="M19 9h7v7a3.5 3.5 0 0 1-7 0z" fill="#5b5fc7"/><path d="M10 9h11v9a5.5 5.5 0 0 1-11 0z" fill="#7b83eb"/><rect x="2" y="6" width="13" height="13" rx="1.5" fill="#4b53bc"/><path d="M5 9.5h7M8.5 9.5v7" stroke="#fff" stroke-width="2"/></svg>
 <div class="a" style="left:954px;top:40px;width:17px;height:3px;border-radius:2px;background:#4cc2ff"></div>
 <svg class="a" style="left:994px;top:11px" width="26" height="26" viewBox="0 0 26 26"><defs><linearGradient id="edg" x1="0.1" y1="0.9" x2="0.9" y2="0.1"><stop offset="0" stop-color="#0b57a8"/><stop offset=".45" stop-color="#1c8fe0"/><stop offset=".7" stop-color="#2cc0d0"/><stop offset="1" stop-color="#6ee07a"/></linearGradient></defs><circle cx="13" cy="13" r="12" fill="url(#edg)"/><ellipse cx="15" cy="14" rx="4.2" ry="3.4" fill="#102030"/><path d="M13 17.5c3 2.5 8 2 11-1.5-1 4.5-5 8-11 8.5z" fill="#1766c0"/><ellipse cx="22" cy="19" rx="3.5" ry="2.5" fill="#172935"/></svg>
 <svg class="a" style="left:1038px;top:13px" width="26" height="23" viewBox="0 0 26 23"><path d="M0 2a2 2 0 0 1 2-2h7l3 3h12a2 2 0 0 1 2 2v2H0z" fill="#e8a82c"/><rect x="0" y="5" width="26" height="17" rx="1.5" fill="#ffd75e"/><rect x="7" y="13" width="12" height="9" rx="1.5" fill="#1e7fd8"/></svg>
 <div class="a" style="left:1048px;top:41px;width:6px;height:3px;border-radius:2px;background:#9aa0a6"></div>
 <svg class="a" style="left:1083px;top:12px" width="24" height="24" viewBox="0 0 24 24"><circle cx="12" cy="12" r="12" fill="#dd4b3e"/><path d="M12 12L1.6 6A12 12 0 0 0 6 22.4z" fill="#1e9e4a"/><path d="M12 12l-6 10.4A12 12 0 0 0 24 12 12 12 0 0 0 22.4 6z" fill="#fcc934"/><path d="M12 12L22.4 6H12z" fill="#dd4b3e"/><circle cx="12" cy="12" r="5.5" fill="#fff"/><circle cx="12" cy="12" r="4.3" fill="#2a7de1"/></svg>
 <div class="a" style="left:1092px;top:41px;width:6px;height:3px;border-radius:2px;background:#9aa0a6"></div>
 <svg class="a" style="left:1127px;top:12px" width="24" height="24" viewBox="0 0 24 24"><rect x="9" y="3" width="14" height="18" fill="#fff"/><path d="M12 7h9M12 10h9M12 13h9M12 16h9" stroke="#3a5fa8" stroke-width="1"/><path d="M0 3.5L13 1v22L0 20.5z" fill="#2b579a"/><path d="M2.5 8l1.3 7 1.5-5 1.5 5 1.3-7" fill="none" stroke="#fff" stroke-width="1.3"/></svg>
 <svg class="a" style="left:1171px;top:12px" width="24" height="24" viewBox="0 0 24 24"><rect x="9" y="3" width="14" height="18" fill="#fff"/><path d="M12 7h9M12 10h9M12 13h9M12 16h9M16 4v16" stroke="#217346" stroke-width="1"/><path d="M0 3.5L13 1v22L0 20.5z" fill="#1e7145"/><path d="M3 8l5 8M8 8l-5 8" stroke="#fff" stroke-width="1.6"/></svg>
 <div class="a" style="left:1179px;top:41px;width:6px;height:3px;border-radius:2px;background:#9aa0a6"></div>
 <div class="a" style="left:1207px;top:4px;width:40px;height:40px;border-radius:4px;background:#6e3a43"></div>
 <svg class="a" style="left:1215px;top:13px" width="24" height="24" viewBox="0 0 24 24"><circle cx="11.5" cy="11.5" r="11" fill="#2a9de0"/><path d="M4.5 11.5l12-5-2 11-3.5-3-2 2v-3l5-4.5-6.5 4z" fill="#fff"/></svg>
 <div class="a" style="left:1229px;top:12px;width:16px;height:13px;border-radius:3px;background:#e53935;color:#fff;font-size:9.5px;line-height:13px;text-align:center">.39</div>
 <div class="a" style="left:1211px;top:40px;width:32px;height:3px;border-radius:2px;background:#f4a0ac"></div>
 <svg class="a" style="left:1625px;top:18.5px" width="14" height="10" viewBox="0 0 14 10"><path d="M1.5 8l5.5-5.5 5.5 5.5" fill="none" stroke="#fff" stroke-width="1.4"/></svg>
 <svg class="a" style="left:1654px;top:13px" width="22" height="22" viewBox="0 0 22 22"><path d="M4 9a7 7 0 0 1 12.5-3M18 13a7 7 0 0 1-12.5 3" fill="none" stroke="#fff" stroke-width="1.3"/><path d="M16.8 2.5v3.8h-3.8M5.2 19.5v-3.8H9" fill="none" stroke="#fff" stroke-width="1.3"/><circle cx="12.5" cy="14.5" r="3.5" fill="#f59b1e"/></svg>
 <svg class="a" style="left:1687px;top:13px" width="18" height="22" viewBox="0 0 18 22"><rect x="6" y="1.5" width="6" height="11" rx="3" fill="none" stroke="#8fd3e8" stroke-width="1.4"/><path d="M3 9.5a6 6 0 0 0 12 0M9 15.5v4" fill="none" stroke="#8fd3e8" stroke-width="1.4"/></svg>
 <div class="a" style="left:1723px;top:17px;font-size:12px;color:#fff;line-height:14px">РУС</div>
 <svg class="a" style="left:1762px;top:15px" width="20" height="18" viewBox="0 0 20 18"><path d="M1.5 6.5a12 12 0 0 1 17 0M4.5 9.5a7.8 7.8 0 0 1 11 0M7.3 12.3a3.8 3.8 0 0 1 5.4 0" fill="none" stroke="#fff" stroke-width="1.4" stroke-linecap="round"/><circle cx="10" cy="15" r="1.3" fill="#fff"/></svg>
 <svg class="a" style="left:1786px;top:14px" width="20" height="20" viewBox="0 0 20 20"><path d="M2 7.5h3l4.5-4v13l-4.5-4H2z" fill="none" stroke="#fff" stroke-width="1.2" stroke-linejoin="round"/><path d="M12 7.5a3.5 3.5 0 0 1 0 5M14.3 5.5a6.5 6.5 0 0 1 0 9M16.6 3.5a9.5 9.5 0 0 1 0 13" fill="none" stroke="#fff" stroke-width="1.2" stroke-linecap="round"/></svg>
 <svg class="a" style="left:1810px;top:15px" width="20" height="18" viewBox="0 0 20 18"><rect x="1.5" y="5" width="14.5" height="9" rx="1.5" fill="none" stroke="#fff" stroke-width="1.3"/><rect x="16.5" y="7.5" width="2" height="4" rx=".8" fill="#fff"/><path d="M7 2L4 8h3l-1.5 4" fill="none" stroke="#fff" stroke-width="1.2"/><rect x="3.5" y="7" width="5" height="5" fill="#fff"/></svg>
 <div class="a" style="left:1840px;top:9px;width:62px;text-align:right;font-size:12px;color:#fff;line-height:14px">15:44</div>
 <div class="a" style="left:1830px;top:24px;width:72px;text-align:right;font-size:12px;color:#fff;line-height:14px">09.10.2025</div>
</div>

</body></html>
